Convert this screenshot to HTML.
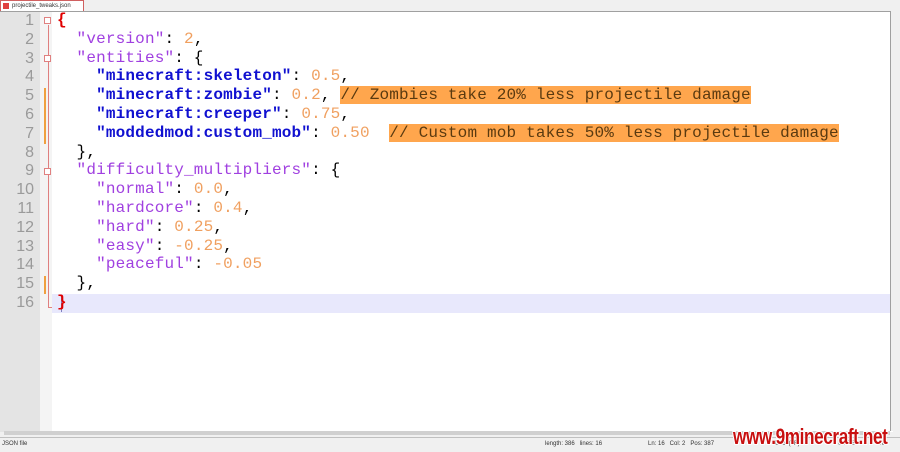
<!DOCTYPE html>
<html><head><style>
body{margin:0;width:900px;height:451px;overflow:hidden;background:#f0f0f0;position:relative;font-family:"Liberation Sans",sans-serif}
.tabbar{position:absolute;left:0;top:0;width:900px;height:11px;background:#f0f0f0;border-bottom:1px solid #c8c8c8}
.tab{position:absolute;left:0;top:0;width:84px;height:11px;background:#fff;border:1px solid #d06060;border-bottom:none;box-sizing:border-box;font-size:6px;line-height:10px;padding-left:11px;color:#333}
.tab i{position:absolute;left:2px;top:2px;width:6px;height:6px;background:#e04040}
.ed{position:absolute;left:0;top:11px;width:893px;height:420px;background:#fff;border-top:1px solid #a0a0a0}
.ln{position:absolute;left:0;top:0;width:40px;height:420px;background:#e4e4e4}
.fm{position:absolute;left:40px;top:0;width:12px;height:420px;background:#f4f4f4}
.vs{position:absolute;left:890px;top:11px;width:10px;height:420px;background:#f0f0f0;border-left:1px solid #a0a0a0}
.cur{position:absolute;left:52px;top:282px;width:841px;height:19px;background:#e8e8fc}
.l{position:absolute;left:57px;height:19px;line-height:19px;font-family:"Liberation Mono",monospace;font-size:16px;letter-spacing:0.17px;white-space:pre;color:#000}
.n{position:absolute;left:0;width:34px;text-align:right;height:19px;line-height:19px;font-family:"Liberation Sans",sans-serif;font-size:16px;color:#9a9a9a}
.p{color:#a040e0}.b{color:#1010d0;font-weight:bold}.o{color:#f0a060}.r{color:#e00000;font-weight:bold}
.c{background:#ffa64d;color:#5a3a10}
.mk{position:absolute;left:44px;width:2px;background:#f0a040}
.hs{position:absolute;left:4px;top:420px;width:886px;height:4px;background:#d0d0d0}
.st{position:absolute;left:0;top:437px;width:900px;height:14px;background:#f0f0f0;border-top:1px solid #c0c0c0;font-size:6px;line-height:13px;color:#333}
.st span{position:absolute}
.wm{position:absolute;left:733px;top:424px;font-family:"Liberation Sans",sans-serif;font-weight:bold;font-size:22px;color:#c81010;letter-spacing:-0.5px;text-shadow:1px 1px 0 #fff,-1px -1px 0 #fff,1px -1px 0 #fff,-1px 1px 0 #fff;transform:scaleX(0.78);transform-origin:left}
</style></head><body>
<div class="tabbar"><div class="tab"><i></i>projectile_tweaks.json</div></div>
<div class="ed">
<div class="ln"></div><div class="fm"></div>
<div style="position:absolute;left:48px;top:13px;width:1px;height:283px;background:#e08080"></div>
<div style="position:absolute;left:48px;top:295px;width:5px;height:1px;background:#e08080"></div>
<div class="cur"></div>
<div class="mk" style="top:76px;height:56px"></div>
<div class="mk" style="top:264px;height:18px"></div>
<div style="position:absolute;left:61px;top:284px;width:1px;height:16px;background:#8080c0"></div>
<div style="position:absolute;left:44px;top:5px;width:7px;height:7px;border:1px solid #e08080;box-sizing:border-box;background:#fff"></div>
<div style="position:absolute;left:44px;top:43px;width:7px;height:7px;border:1px solid #e08080;box-sizing:border-box;background:#fff"></div>
<div style="position:absolute;left:44px;top:156px;width:7px;height:7px;border:1px solid #e08080;box-sizing:border-box;background:#fff"></div>
</div>
<div style="position:absolute;left:0;top:11px">
<div class="n" style="top:0">1</div><div class="n" style="top:18.8px">2</div><div class="n" style="top:37.6px">3</div><div class="n" style="top:56.4px">4</div><div class="n" style="top:75.2px">5</div><div class="n" style="top:94px">6</div><div class="n" style="top:112.8px">7</div><div class="n" style="top:131.6px">8</div><div class="n" style="top:150.4px">9</div><div class="n" style="top:169.2px">10</div><div class="n" style="top:188px">11</div><div class="n" style="top:206.8px">12</div><div class="n" style="top:225.6px">13</div><div class="n" style="top:244.4px">14</div><div class="n" style="top:263.2px">15</div><div class="n" style="top:282px">16</div>
<div class="l" style="top:0"><span class="r">{</span></div>
<div class="l" style="top:18.8px">  <span class="p">"version"</span>: <span class="o">2</span>,</div>
<div class="l" style="top:37.6px">  <span class="p">"entities"</span>: {</div>
<div class="l" style="top:56.4px">    <span class="b">"minecraft:skeleton"</span>: <span class="o">0.5</span>,</div>
<div class="l" style="top:75.2px">    <span class="b">"minecraft:zombie"</span>: <span class="o">0.2</span>, <span class="c">// Zombies take 20% less projectile damage</span></div>
<div class="l" style="top:94px">    <span class="b">"minecraft:creeper"</span>: <span class="o">0.75</span>,</div>
<div class="l" style="top:112.8px">    <span class="b">"moddedmod:custom_mob"</span>: <span class="o">0.50</span>  <span class="c">// Custom mob takes 50% less projectile damage</span></div>
<div class="l" style="top:131.6px">  },</div>
<div class="l" style="top:150.4px">  <span class="p">"difficulty_multipliers"</span>: {</div>
<div class="l" style="top:169.2px">    <span class="p">"normal"</span>: <span class="o">0.0</span>,</div>
<div class="l" style="top:188px">    <span class="p">"hardcore"</span>: <span class="o">0.4</span>,</div>
<div class="l" style="top:206.8px">    <span class="p">"hard"</span>: <span class="o">0.25</span>,</div>
<div class="l" style="top:225.6px">    <span class="p">"easy"</span>: <span class="o">-0.25</span>,</div>
<div class="l" style="top:244.4px">    <span class="p">"peaceful"</span>: <span class="o">-0.05</span></div>
<div class="l" style="top:263.2px">  },</div>
<div class="l" style="top:282px"><span class="r">}</span></div>
<div class="hs"></div>
</div>
<div class="vs"></div>
<div class="st"><span style="left:2px">JSON file</span><span style="left:545px">length: 386&nbsp;&nbsp;&nbsp;lines: 16</span><span style="left:648px">Ln: 16&nbsp;&nbsp;&nbsp;Col: 2&nbsp;&nbsp;&nbsp;Pos: 387</span><span style="left:775px">Unix (LF)</span><span style="left:838px">UTF-8</span><span style="left:878px">INS</span></div>
<div class="wm">www.9minecraft.net</div>
</body></html>
